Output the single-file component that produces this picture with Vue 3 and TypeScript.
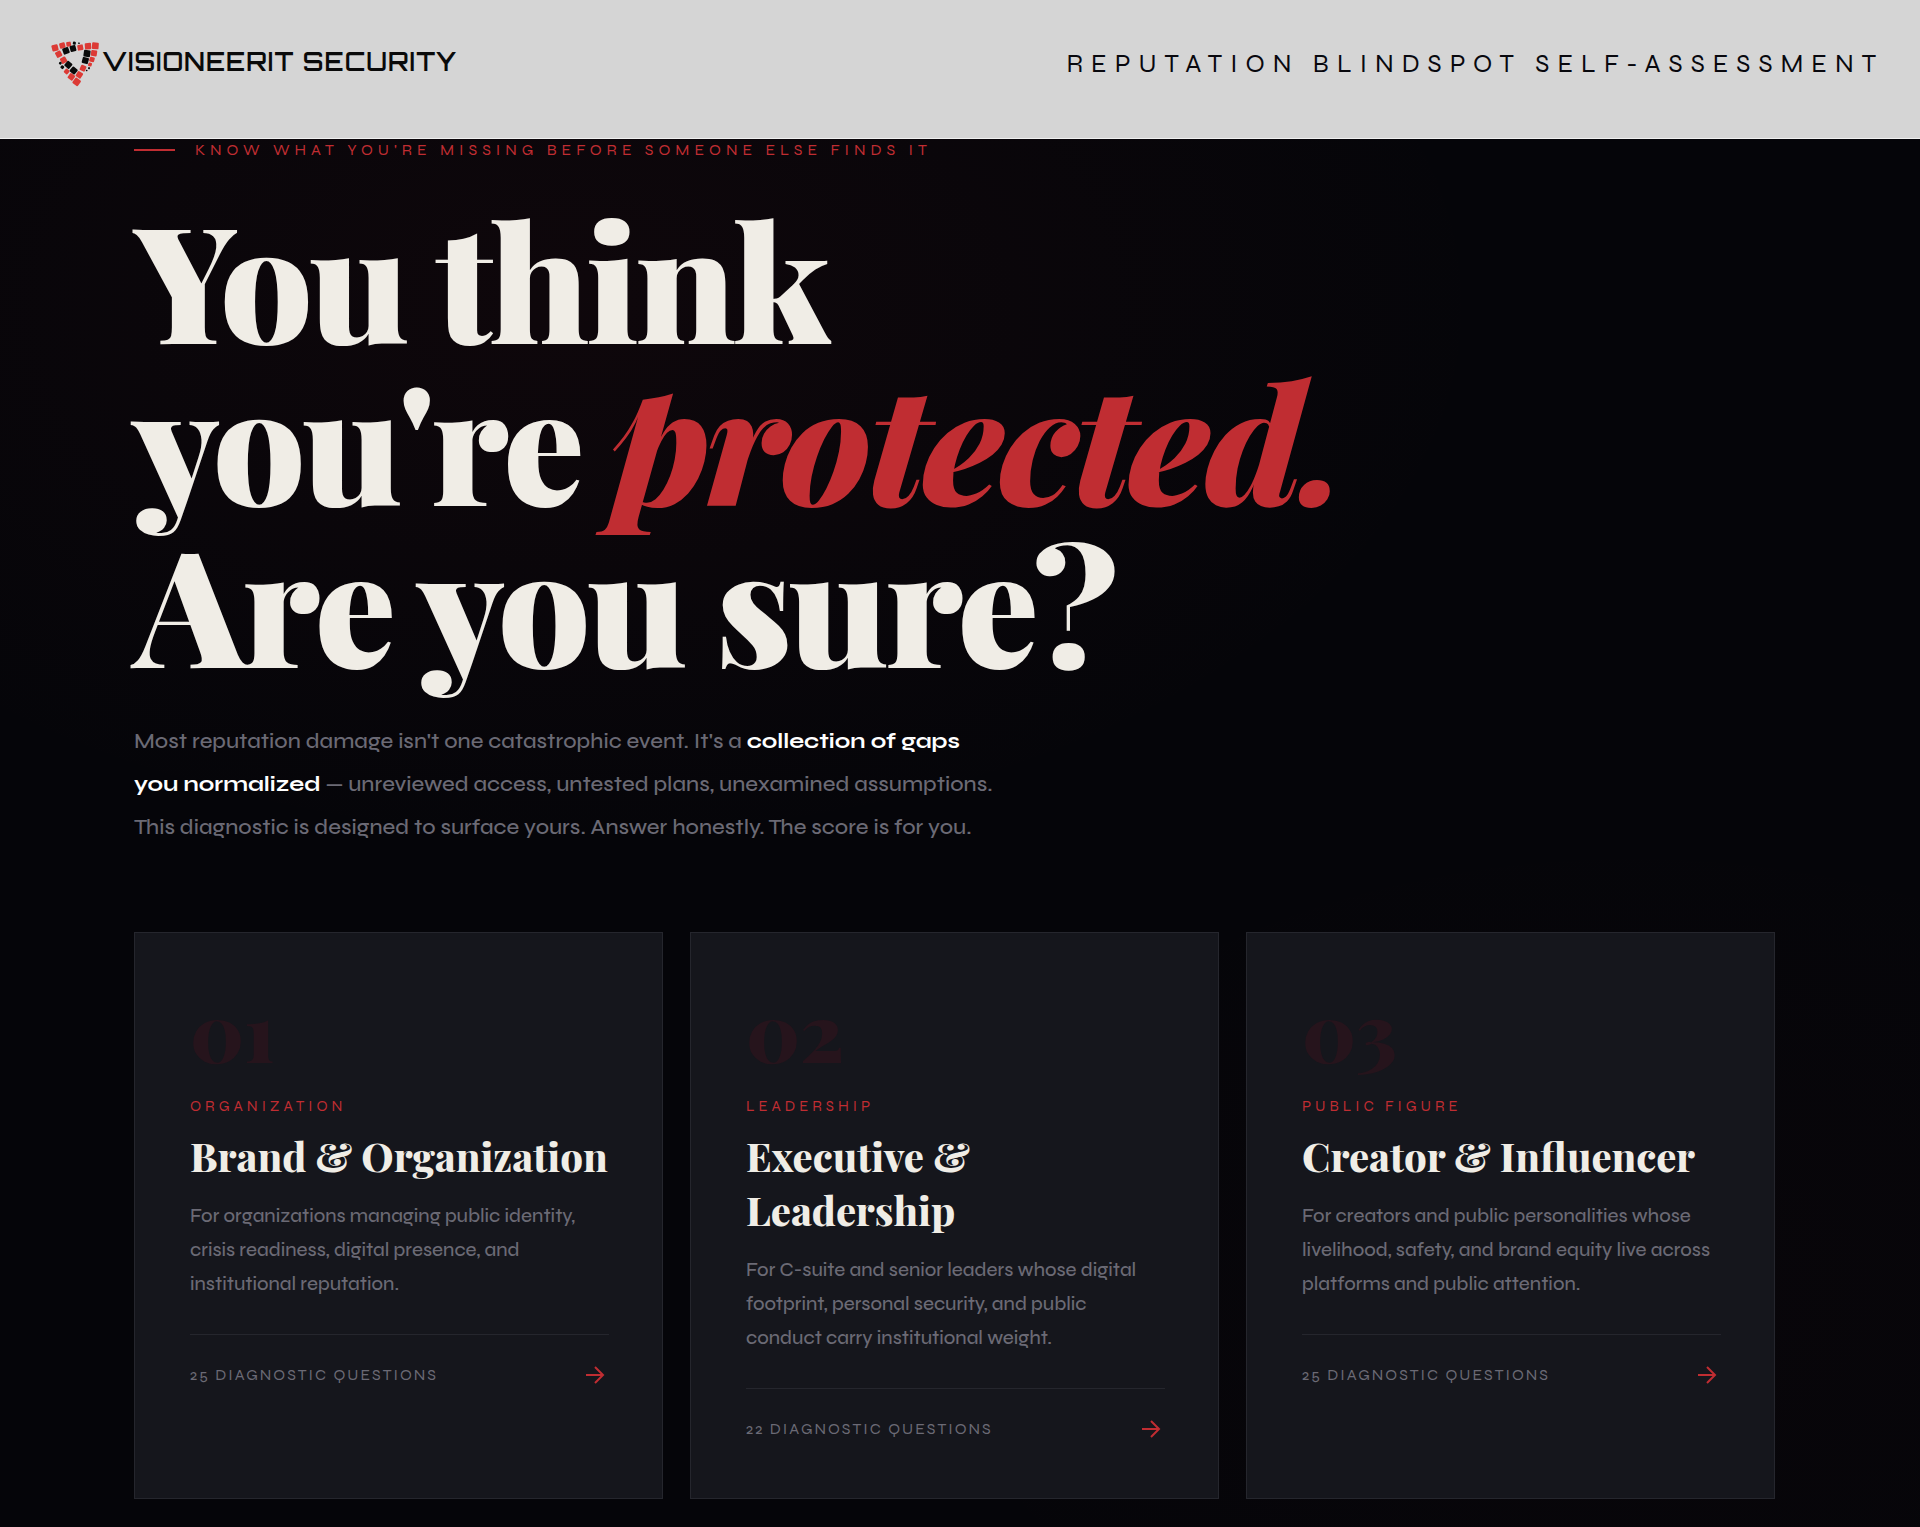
<script setup lang="ts">
interface Track {
  id: string
  number: string
  label: string
  title: string
  description: string
  questions: number
}

interface Cell {
  x: number
  y: number
  size: number
  angle: number
  red: boolean
}

const tracks: Track[] = [
  {
    id: 'organization',
    number: '01',
    label: 'Organization',
    title: 'Brand & Organization',
    description:
      'For organizations managing public identity, crisis readiness, digital presence, and institutional reputation.',
    questions: 25,
  },
  {
    id: 'leadership',
    number: '02',
    label: 'Leadership',
    title: 'Executive & Leadership',
    description:
      'For C-suite and senior leaders whose digital footprint, personal security, and public conduct carry institutional weight.',
    questions: 22,
  },
  {
    id: 'public-figure',
    number: '03',
    label: 'Public Figure',
    title: 'Creator & Influencer',
    description:
      'For creators and public personalities whose livelihood, safety, and brand equity live across platforms and public attention.',
    questions: 25,
  },
]

const cell = (x: number, y: number, size: number, angle: number, red: boolean): Cell => ({ x, y, size, angle, red })

/* Tiles of the triangular mark, clockwise from the top left corner */
const cells: Cell[] = [
  cell(45, 54, 19, -14, true),
  cell(67, 47, 17, -14, true),
  cell(86, 43, 14, -10, true),
  cell(103, 40, 9, 10, false),
  cell(117, 40, 5, 20, false),
  cell(121, 53, 17, -10, true),
  cell(144, 49, 19, -4, true),
  cell(166, 48, 20, 4, true),
  cell(162, 70, 18, 8, true),
  cell(156, 89, 15, 15, true),
  cell(150, 104, 11, 20, true),
  cell(147, 115, 6, 30, false),
  cell(140, 122, 5, 30, false),
  cell(78, 63, 19, -20, false),
  cell(99, 56, 18, -15, false),
  cell(141, 71, 20, 8, false),
  cell(136, 92, 19, 15, false),
  cell(129, 115, 17, 25, true),
  cell(118, 135, 18, 32, true),
  cell(56, 73, 18, -28, true),
  cell(71, 91, 18, -30, true),
  cell(61, 100, 8, 30, false),
  cell(67, 112, 10, 40, false),
  cell(85, 105, 19, 40, false),
  cell(101, 122, 19, 40, false),
  cell(80, 125, 14, 40, true),
  cell(94, 141, 18, 36, true),
  cell(110, 156, 20, 36, true),
]
</script>

<template>
  <div class="page">
    <header class="topbar">
      <a class="brand" href="#top" aria-label="VisioneerIT Security">
        <svg class="brand-mark" viewBox="30 34 150 140" aria-hidden="true">
          <rect
            v-for="(c, i) in cells"
            :key="i"
            :x="c.x - c.size / 2"
            :y="c.y - c.size / 2"
            :width="c.size"
            :height="c.size"
            rx="3"
            :fill="c.red ? '#dc3a35' : '#0a0a0a'"
            :transform="`rotate(${c.angle} ${c.x} ${c.y})`"
          />
        </svg>
        <span class="brand-name">VISIONEERIT SECURITY</span>
      </a>
      <p class="tagline">Reputation Blindspot Self-Assessment</p>
    </header>

    <main id="top" class="content">
      <p class="eyebrow">Know what you're missing before someone else finds it</p>
      <h1 class="headline">
        You think<br />
        you're <em>protected.</em><br />
        Are you sure?
      </h1>
      <p class="intro">
        Most reputation damage isn't one catastrophic event. It's a <strong>collection of gaps</strong><br />
        <strong>you normalized</strong> — unreviewed access, untested plans, unexamined assumptions.<br />
        This diagnostic is designed to surface yours. Answer honestly. The score is for you.
      </p>

      <section class="tracks" aria-label="Assessments">
        <a v-for="track in tracks" :key="track.id" class="card" :href="`#${track.id}`">
          <span class="card-number">{{ track.number }}</span>
          <span class="card-label">{{ track.label }}</span>
          <h2 class="card-title">{{ track.title }}</h2>
          <p class="card-text">{{ track.description }}</p>
          <div class="card-footer">
            <span>{{ track.questions }} Diagnostic Questions</span>
            <svg class="arrow" viewBox="0 0 20 20" aria-hidden="true">
              <path d="M1 10h17M10 2l8 8-8 8" />
            </svg>
          </div>
        </a>
      </section>
    </main>
  </div>
</template>

<style>
body {
  margin: 0;
  background: #050509;
}
</style>

<style scoped>
.page {
  min-height: 100vh;
  box-sizing: border-box;
  font-family: Syne, Lato, 'Liberation Sans', sans-serif;
  color: #f0ede6;
  background:
    radial-gradient(ellipse 60% 45% at 30% 20%, rgba(192, 45, 50, 0.05), transparent 80%),
    radial-gradient(ellipse 50% 40% at 85% 85%, rgba(192, 45, 50, 0.02), transparent 80%),
    #050509;
}

h1,
h2,
p {
  margin: 0;
}

.topbar {
  display: flex;
  align-items: flex-start;
  justify-content: space-between;
  height: 139px;
  padding: 41px 36px 0 50px;
  box-sizing: border-box;
  background: #d5d5d5;
  border-bottom: 1px solid #f0f0f0;
}

.brand {
  display: flex;
  align-items: flex-start;
  gap: 2px;
  color: #0a0a0a;
  text-decoration: none;
}

.brand-mark {
  width: 50px;
  height: 47px;
}

.brand-name {
  font-family: Orbitron, Inter, sans-serif;
  font-size: 25px;
  font-weight: 600;
  line-height: 42px;
  letter-spacing: 1px;
}

.tagline {
  font-size: 26px;
  line-height: 46px;
  letter-spacing: 8px;
  text-transform: uppercase;
  color: #08080e;
}

.content {
  padding: 0 145px 28px 134px;
}

.eyebrow {
  display: flex;
  align-items: center;
  gap: 20px;
  font-size: 16px;
  line-height: 22px;
  letter-spacing: 5px;
  text-transform: uppercase;
  color: #c02d32;
}

.eyebrow::before {
  content: '';
  width: 41px;
  height: 2px;
  background: #c02d32;
}

.headline {
  margin-top: 35px;
  font-family: 'Playfair Display', 'Liberation Serif', serif;
  font-size: 162px;
  font-weight: 900;
  line-height: 162px;
  letter-spacing: -4px;
}

.headline em {
  color: #c02d32;
}

.intro {
  margin-top: 38px;
  font-size: 22px;
  font-weight: 500;
  line-height: 43px;
  color: #6b6a75;
}

.intro strong {
  font-weight: 700;
  color: #ffffff;
}

.tracks {
  display: grid;
  grid-template-columns: repeat(3, 1fr);
  gap: 27px;
  margin-top: 83px;
}

.card {
  display: flex;
  flex-direction: column;
  padding: 55px 53px 55px 55px;
  color: inherit;
  text-decoration: none;
  background: #15161c;
  border: 1px solid #25262d;
}

.card-number {
  font-family: 'Playfair Display', 'Liberation Serif', serif;
  font-size: 80px;
  font-weight: 900;
  line-height: 84px;
  color: #26141c;
}

.card-label {
  margin-top: 24px;
  font-size: 15px;
  line-height: 20px;
  letter-spacing: 4px;
  text-transform: uppercase;
  color: #c02d32;
}

.card-title {
  margin-top: 13px;
  font-family: 'Playfair Display', 'Liberation Serif', serif;
  font-size: 40px;
  font-weight: 800;
  line-height: 54px;
}

.card-text {
  margin-top: 16px;
  font-size: 19px;
  font-weight: 500;
  line-height: 34px;
  color: #6b6a75;
}

.card-footer {
  display: flex;
  align-items: center;
  justify-content: space-between;
  margin-top: 33px;
  padding: 26px 4px 0 0;
  border-top: 1px solid #25262d;
  font-size: 16px;
  line-height: 28px;
  letter-spacing: 2px;
  text-transform: uppercase;
  color: #6b6a75;
}

.arrow {
  width: 20px;
  height: 20px;
  fill: none;
  stroke: #c02d32;
  stroke-width: 2;
}
</style>
